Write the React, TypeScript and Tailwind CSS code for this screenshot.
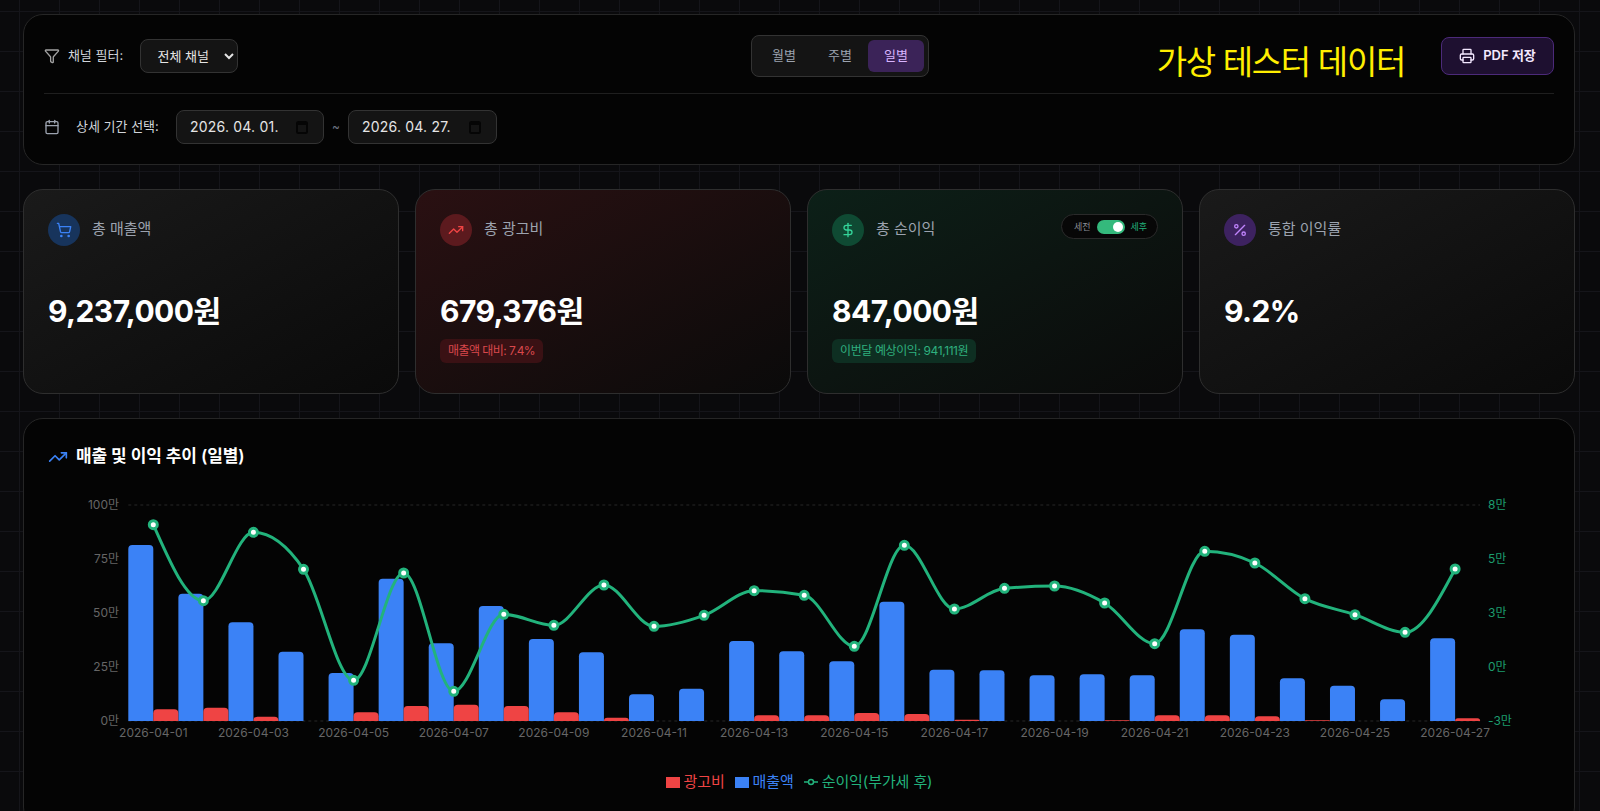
import { Calendar, DollarSign, Filter, Percent, Printer, ShoppingCart, TrendingUp } from "lucide-react";

const FONT = "font-['Inter','Noto_Sans_CJK_KR',sans-serif]";

// tops of the bars and line points, in 1/3 px from the top of the chart crop
const revenue = [150, 296, 382, 470, 534, 251, 445, 333, 432, 472, 598, 581, 438, 469, 499, 320, 524, 526, 541, 538, 541, 403, 419, 550, 572, 613, 430];
const adCost = [643, 638, 665, 0, 652, 633, 629, 633, 652, 668, 0, 0, 661, 661, 654, 657, 674, 0, 0, 676, 661, 661, 664, 676, 0, 0, 670];
const profit = [89, 317, 112, 223, 556, 234, 589, 358, 391, 270, 394, 361, 287, 301, 454, 151, 342, 280, 273, 324, 446, 169, 204, 311, 359, 412, 222];

const STEP = 50.07;
const PLOT_LEFT = 80.3;
const BASE = 241;
const toY = (v: number) => 15 + v / 3;
const centerX = (i: number) => PLOT_LEFT + STEP * i + 25;

function topRoundedBar(x: number, y: number, w: number) {
    const r = Math.min(4, BASE - y);
    return `M${x},${BASE} V${y + r} Q${x},${y} ${x + r},${y} H${x + w - r} Q${x + w},${y} ${x + w},${y + r} V${BASE} Z`;
}

// same curve recharts calls "monotone"
function monotonePath(points: [number, number][]) {
    const n = points.length;
    const sign = (v: number) => (v < 0 ? -1 : 1);
    const slopes: number[] = [];
    for (let i = 0; i < n; i++) {
        if (i === 0 || i === n - 1) {
            slopes.push(NaN);
            continue;
        }
        const h0 = points[i][0] - points[i - 1][0];
        const h1 = points[i + 1][0] - points[i][0];
        const s0 = (points[i][1] - points[i - 1][1]) / h0;
        const s1 = (points[i + 1][1] - points[i][1]) / h1;
        const p = (s0 * h1 + s1 * h0) / (h0 + h1);
        slopes.push((sign(s0) + sign(s1)) * Math.min(Math.abs(s0), Math.abs(s1), 0.5 * Math.abs(p)) || 0);
    }
    const edge = (i: number, neighbour: number) => {
        const h = points[1][0] - points[0][0];
        const s = i === 0 ? (points[1][1] - points[0][1]) / h : (points[n - 1][1] - points[n - 2][1]) / h;
        return (3 * s - neighbour) / 2;
    };
    slopes[0] = edge(0, slopes[1]);
    slopes[n - 1] = edge(n - 1, slopes[n - 2]);

    let d = `M${points[0][0]},${points[0][1]}`;
    for (let i = 0; i < n - 1; i++) {
        const dx = (points[i + 1][0] - points[i][0]) / 3;
        d += ` C${points[i][0] + dx},${points[i][1] + dx * slopes[i]} ${points[i + 1][0] - dx},${points[i + 1][1] - dx * slopes[i + 1]} ${points[i + 1][0]},${points[i + 1][1]}`;
    }
    return d;
}

function TrendChart() {
    const leftTicks = ["100만", "75만", "50만", "25만", "0만"];
    const rightTicks = ["8만", "5만", "3만", "0만", "-3만"];
    const linePoints = profit.map((v, i) => [centerX(i), toY(v)] as [number, number]);

    return (
        <svg width="1502" height="285" className="mt-[9px] block">
            <line x1={PLOT_LEFT} x2={1432} y1={25} y2={25} stroke="#262626" strokeDasharray="3 3" />
            <line x1={PLOT_LEFT} x2={1432} y1={BASE} y2={BASE} stroke="#262626" strokeDasharray="3 3" />
            {leftTicks.map((t, i) => (
                <text key={t} x={71} y={25 + i * 54 + 4} textAnchor="end" fontSize="12" fill="#666666">{t}</text>
            ))}
            {rightTicks.map((t, i) => (
                <text key={t} x={1440} y={25 + i * 54 + 4} fontSize="12" fill="#1c9c6e">{t}</text>
            ))}
            {revenue.map((v, i) => (
                <path key={i} d={topRoundedBar(PLOT_LEFT + STEP * i, toY(v), 25)} fill="#3b82f6" />
            ))}
            {adCost.map((v, i) =>
                v > 0 ? <path key={i} d={topRoundedBar(PLOT_LEFT + STEP * i + 25, toY(v), 25)} fill="#ef4444" /> : null
            )}
            <path d={monotonePath(linePoints)} fill="none" stroke="#22b37c" strokeWidth="3" />
            {linePoints.map(([x, y], i) => (
                <circle key={i} cx={x} cy={y} r="4" fill="#ffffff" stroke="#22b37c" strokeWidth="3" />
            ))}
            {revenue.map((_, i) =>
                i % 2 === 0 ? (
                    <text key={i} x={centerX(i)} y={257} textAnchor="middle" fontSize="12" fill="#666666">
                        {`2026-04-${String(i + 1).padStart(2, "0")}`}
                    </text>
                ) : null
            )}
        </svg>
    );
}

function DateBox({ value, className }: { value: string, className: string }) {
    return (
        <div className={`flex h-[34px] items-center justify-between rounded-lg border border-[#333333] bg-[#141414] pl-[13px] pr-[15px] text-sm tracking-[0.2px] text-[#e5e5e5] ${className}`}>
            <span>{value}</span>
            <svg width="12" height="14" viewBox="0 0 12 14" fill="none">
                <rect x="1" y="2" width="10" height="11" rx="1.5" stroke="#050505" strokeWidth="2" />
                <rect x="1" y="2" width="10" height="3" fill="#050505" />
            </svg>
        </div>
    );
}

function StatCard({ className, iconBg, icon, label, value, extra, badge }: {
    className: string, iconBg: string, icon: React.ReactNode, label: string, value: string, extra?: React.ReactNode, badge?: React.ReactNode
}) {
    return (
        <div className={`h-[205px] rounded-[20px] border border-[#2e2e2e] p-6 ${className}`}>
            <div className="flex h-8 items-start justify-between">
                <div className="flex items-center gap-3">
                    <div className={`flex h-8 w-8 items-center justify-center rounded-full ${iconBg}`}>{icon}</div>
                    <span className="-mt-[2px] text-[15px] text-[#9ca3af]">{label}</span>
                </div>
                {extra}
            </div>
            <div className="mt-[47px] text-3xl font-bold tracking-[-0.55px] text-white">{value}</div>
            {badge}
        </div>
    );
}

export default function App() {
    return (
        <div className={`h-screen overflow-hidden bg-[#0a0a0c] bg-[linear-gradient(#15151a_1px,transparent_1px),linear-gradient(90deg,#15151a_1px,transparent_1px)] bg-[size:40px_40px] bg-[position:19px_11px] pl-[23px] pr-[25px] pt-[14px] ${FONT}`}>
            <div className="rounded-[20px] border border-[#262626] bg-[#040404] p-5">
                <div className="flex h-[42px] items-center">
                    <div className="flex w-[194px] items-center">
                        <Filter size={16} className="text-[#a3a3a3]" />
                        <span className="ml-2 w-[73px] text-[13px] text-[#d1d5db]">채널 필터:</span>
                        <select className="h-[34px] w-[98px] rounded-lg border border-[#333333] bg-[#141414] pl-3 text-[13px] text-[#e5e5e5] outline-none">
                            <option>전체 채널</option>
                        </select>
                    </div>
                    <div className="ml-[513px] flex h-[42px] rounded-lg border border-[#333333] bg-[#141414] p-1">
                        <div className="flex w-14 items-center justify-center rounded-md text-[13px] text-[#9ca3af]">월별</div>
                        <div className="flex w-14 items-center justify-center rounded-md text-[13px] text-[#9ca3af]">주별</div>
                        <div className="flex w-14 items-center justify-center rounded-md bg-[#3b2358] text-[13px] text-[#d8b4fe]">일별</div>
                    </div>
                    <span className="ml-auto mt-[13px] text-[33px] tracking-[-0.04em] text-[#ffee00]">가상 테스터 데이터</span>
                    <button className="ml-[36px] flex h-[38px] w-[113px] items-center justify-center gap-2 rounded-lg border border-[#4c2a7a] bg-[#1e1030] text-[13px] font-semibold text-[#f3e8ff]">
                        <Printer size={16} />
                        PDF 저장
                    </button>
                </div>
                <div className="my-4 h-px bg-[#1f1f1f]" />
                <div className="flex items-center">
                    <Calendar size={16} className="text-[#9ca3af]" />
                    <span className="ml-4 w-[100px] text-[13px] text-[#d1d5db]">상세 기간 선택:</span>
                    <DateBox value="2026. 04. 01." className="w-[148px]" />
                    <span className="w-6 text-center text-xs text-[#6b7280]">~</span>
                    <DateBox value="2026. 04. 27." className="w-[149px]" />
                </div>
            </div>

            <div className="mt-6 grid grid-cols-4 gap-4">
                <StatCard
                    className="bg-gradient-to-br from-[#1a1a1a] to-[#0a0a0a]"
                    iconBg="bg-[#17345c]"
                    icon={<ShoppingCart size={16} className="text-[#3b82f6]" />}
                    label="총 매출액"
                    value="9,237,000원"
                />
                <StatCard
                    className="bg-gradient-to-br from-[#2a1012] to-[#0a0a0a]"
                    iconBg="bg-[#5c1a1e]"
                    icon={<TrendingUp size={16} className="text-[#ef4444]" />}
                    label="총 광고비"
                    value="679,376원"
                    badge={<span className="mt-[10px] inline-flex h-6 items-center rounded-md bg-[#3a1114] px-2 text-xs tracking-[-0.55px] text-[#d9484c]">매출액 대비: 7.4%</span>}
                />
                <StatCard
                    className="bg-gradient-to-br from-[#0c2018] to-[#0a0a0a]"
                    iconBg="bg-[#0f4a33]"
                    icon={<DollarSign size={16} className="text-[#34d399]" />}
                    label="총 순이익"
                    value="847,000원"
                    extra={
                        <div className="flex h-[25px] w-[97px] items-center gap-[6px] rounded-full border border-[#2a2a2a] bg-[#070707] pl-3 text-[9px]">
                            <span className="text-[#8b8f96]">세전</span>
                            <div className="flex h-[14px] w-7 items-center justify-end rounded-full bg-[#34b97c] pr-[2px]">
                                <div className="h-[10px] w-[10px] rounded-full bg-white" />
                            </div>
                            <span className="text-[#22b37c]">세후</span>
                        </div>
                    }
                    badge={<span className="mt-[10px] inline-flex h-6 items-center rounded-md bg-[#0e2f22] px-2 text-xs tracking-[-0.4px] text-[#2fb07f]">이번달 예상이익: 941,111원</span>}
                />
                <StatCard
                    className="bg-gradient-to-br from-[#1a1a1a] to-[#0a0a0a]"
                    iconBg="bg-[#3d2260]"
                    icon={<Percent size={16} className="text-[#c084fc]" />}
                    label="통합 이익률"
                    value="9.2%"
                />
            </div>

            <div className="mt-6 rounded-[20px] border border-[#262626] bg-[#040404] p-6 pb-8">
                <div className="flex h-7 items-center gap-2">
                    <TrendingUp size={20} className="text-[#3b82f6]" />
                    <h3 className="text-[17px] font-semibold tracking-[-0.15px] text-white">매출 및 이익 추이 (일별)</h3>
                </div>
                <TrendChart />
                <div className="mt-[5px] flex items-center justify-center gap-[10px] text-[15px] leading-6 tracking-[-0.1px]">
                    <div className="flex items-center gap-1 text-[#ef4444]">
                        <span className="h-[11px] w-[14px] bg-[#ef4444]" />
                        광고비
                    </div>
                    <div className="flex items-center gap-1 text-[#3b82f6]">
                        <span className="h-[11px] w-[14px] bg-[#3b82f6]" />
                        매출액
                    </div>
                    <div className="flex items-center gap-1 text-[#22b37c]">
                        <svg width="14" height="8" viewBox="0 0 14 8" fill="none">
                            <line x1="0" x2="14" y1="4" y2="4" stroke="#22b37c" strokeWidth="1.5" />
                            <circle cx="7" cy="4" r="2.5" fill="#040404" stroke="#22b37c" strokeWidth="1.5" />
                        </svg>
                        순이익(부가세 후)
                    </div>
                </div>
            </div>
        </div>
    );
}
